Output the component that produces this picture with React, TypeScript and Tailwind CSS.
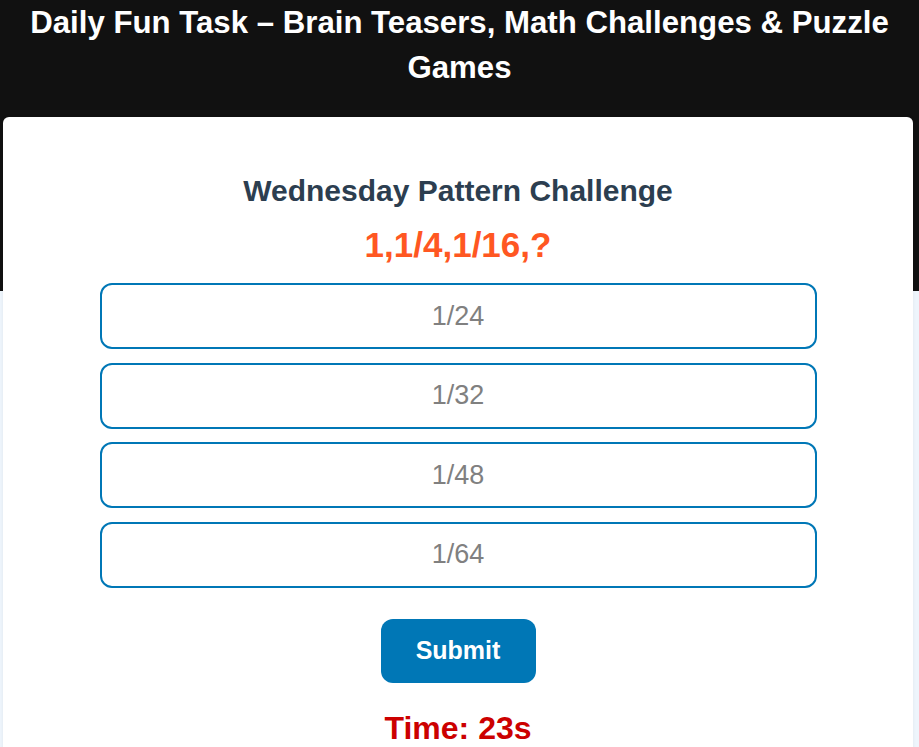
import { useState } from "react";

const options = ["1/24", "1/32", "1/48", "1/64"];

export default function App() {
  const [selected, setSelected] = useState<string | null>(null);

  return (
    <div className="min-h-[747px] bg-[#eef5fc] font-['Liberation_Sans',Arial,sans-serif]">
      <div className="h-[291px] bg-[#111111] pt-0">
        <h1 className="m-0 px-4 text-center text-[31.2px] font-bold leading-[45px] text-white">
          Daily Fun Task – Brain Teasers, Math Challenges &amp; Puzzle Games
        </h1>
      </div>

      <div className="relative -mt-[174px] ml-[3px] w-[910px] rounded-t-md bg-white pb-6 pt-[56px] shadow-[0_0_4px_rgba(0,0,0,0.06)]">
        <h2 className="text-center text-[30px] font-bold leading-[36px] text-[#2c3e50]">
          Wednesday Pattern Challenge
        </h2>
        <div className="mt-[16px] text-center text-[35px] font-bold leading-[40px] text-[#ff5722]">
          1,1/4,1/16,?
        </div>

        <div className="mx-auto mt-[18px] flex w-[717px] flex-col gap-[13.5px]">
          {options.map((opt) => (
            <button
              key={opt}
              onClick={() => setSelected(opt)}
              className={`h-[66px] w-full rounded-xl border-2 border-[#0077b6] text-center text-[27px] text-[#808080] ${
                selected === opt ? "bg-[#e6f3fa]" : "bg-white"
              }`}
            >
              {opt}
            </button>
          ))}
        </div>

        <div className="mt-[31.5px] flex justify-center">
          <button className="h-[64px] w-[155px] rounded-xl bg-[#0077b6] text-[25px] font-bold text-white">
            Submit
          </button>
        </div>

        <div className="mt-[26px] text-center text-[32px] font-bold leading-[38px] text-[#cc0000]">
          Time: 23s
        </div>
      </div>
    </div>
  );
}
